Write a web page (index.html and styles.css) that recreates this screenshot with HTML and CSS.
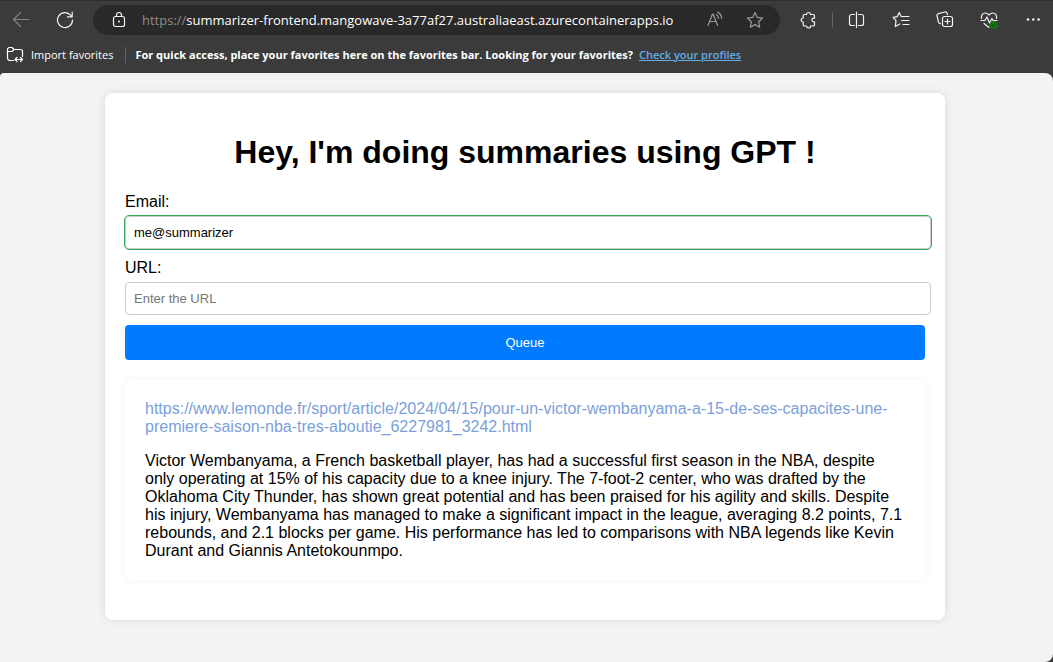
FILE: index.html
```html
<!DOCTYPE html>
<html lang="en">
<head>
<meta charset="utf-8">
<title>Summarizer</title>
<link rel="stylesheet" href="styles.css">
</head>
<body>
<header class="chrome">
  <div class="toolbar">
    <button class="tool tool-disabled" type="button" aria-label="Back"><svg width="18" height="18" viewBox="0 0 18 18"><path d="M17 8.500H1.500M8.500 1.500 1.500 8.500l7 7"/></svg></button>
    <button class="tool" type="button" aria-label="Refresh"><svg width="18" height="18" viewBox="0 0 18 18"><path d="M16.500 9A7.500 7.500 0 1 1 14.800 4.300L16 5.500M16.200 1v4.800h-4.800"/></svg></button>
    <div class="address">
      <button class="address-icon" type="button" aria-label="View site information"><svg width="18" height="18" viewBox="0 0 18 18"><rect x="3.500" y="5.500" width="11" height="10" rx="2"/><path d="M6.500 5.500V4a2.500 2.500 0 0 1 5 0v1.500"/><circle class="solid" cx="9" cy="10.500" r="1"/></svg></button>
      <label class="scheme" for="address-text">https://</label>
      <input class="address-text" id="address-text" type="text" spellcheck="false" value="summarizer-frontend.mangowave-3a77af27.australiaeast.azurecontainerapps.io">
      <button class="address-icon address-dim" type="button" aria-label="Read aloud"><svg width="18" height="18" viewBox="0 0 18 18"><path d="M2 14.500 6.500 3h.6L11.600 14.500M3.700 10.500h6.200M10.500 3.700c1.200.8 1.900 2 2 3.600M11.600 1.100c2.600 1.400 4 3.500 4.100 6.200"/></svg></button>
      <button class="address-icon address-dim" type="button" aria-label="Add to favorites"><svg width="18" height="18" viewBox="0 0 18 18"><path d="m9 1.500 2.300 4.900 5.300.7-3.900 3.700 1 5.400L9 13.600l-4.700 2.600 1-5.400L1.400 7.100l5.300-.7z"/></svg></button>
    </div>
    <button class="tool" type="button" aria-label="Extensions"><svg width="18" height="18" viewBox="0 0 18 18"><path d="M5.500 3.500h2a2 2 0 0 1 4 0h2.700a1.300 1.300 0 0 1 1.300 1.300V7.200h-.8a1.600 1.600 0 0 0 0 3.600h.8v2.900a1.300 1.300 0 0 1-1.300 1.300h-2.700a2 2 0 0 1-4 0h-2a1.300 1.300 0 0 1-1.300-1.300V11a2 2 0 0 1 0-4V4.800a1.300 1.300 0 0 1 1.300-1.300z"/></svg></button>
    <span class="tool-divider"></span>
    <button class="tool" type="button" aria-label="Split screen"><svg width="18" height="18" viewBox="0 0 18 18"><path d="M6.500 3.500h-3a2 2 0 0 0-2 2v7a2 2 0 0 0 2 2h3M10.500 3.500h3a2 2 0 0 1 2 2v7a2 2 0 0 1-2 2h-3M8.500 1v15.500"/></svg></button>
    <button class="tool" type="button" aria-label="Favorites"><svg width="18" height="18" viewBox="0 0 18 18"><path d="m11 5.700-1.800-.2L7.200 1.500 5.200 5.700l-4 .7L4 9.700l-.7 5.900 4.500-2.600M11 5.500h6M9.500 9.500H17M11 13.500h6"/></svg></button>
    <button class="tool" type="button" aria-label="Collections"><svg width="18" height="18" viewBox="0 0 18 18"><path d="M4.500 12.700c-1 0-1.700-.5-2-1.500L1 4.800C.8 3.700 1.300 3 2.300 2.700L8.800 1c1.200-.3 2 .2 2.300 1.300l.4 1.400"/><rect x="6.500" y="5.500" width="10" height="10" rx="2"/><path d="M11.500 8v5M9 10.500h5"/></svg></button>
    <button class="tool" type="button" aria-label="Browser essentials"><svg width="18" height="18" viewBox="0 0 18 18"><path d="M1.500 7.500C.8 4 3 2 5.200 2 7 2 8.200 3 9 4c.8-1 2-2 3.800-2 2.300 0 4.400 2 3.700 5.500M1 9.500h4L7 6l2.500 6L12 7.500l1 2h4M4 12.500l5 4"/><circle class="status" cx="13.500" cy="14" r="3.700"/><path class="status-tick" d="m12 14 1 1 2-2"/></svg></button>
    <button class="tool" type="button" aria-label="Settings and more"><svg width="18" height="18" viewBox="0 0 18 18"><g class="solid"><circle cx="4" cy="8.500" r="1.300"/><circle cx="9.300" cy="8.500" r="1.300"/><circle cx="14.600" cy="8.500" r="1.300"/></g></svg></button>
  </div>
  <div class="favorites">
    <button class="import" type="button"><svg width="18" height="18" viewBox="0 0 18 18"><path d="M7.500 14.500H4a2.500 2.500 0 0 1-2.500-2.500V3.500A2 2 0 0 1 3.500 1.500H6l2 2h6.500a2 2 0 0 1 2 2v5M1.500 5.500H6l2-2M9 13.500h7.500M11 11.500l-2 2 2 2M14.500 11.500l2 2-2 2"/></svg>Import favorites</button>
    <span class="favorites-divider"></span>
    <span class="favorites-note">For quick access, place your favorites here on the favorites bar. Looking for your favorites?</span>
    <a class="favorites-link" href="#profiles">Check your profiles</a>
  </div>
</header>
<main class="page">
  <div class="container">
    <h1 class="title">Hey, I'm doing summaries using GPT !</h1>
    <form class="form">
      <label class="label" for="email">Email:</label>
      <input class="field field-active" id="email" type="text" value="me@summarizer">
      <label class="label" for="url">URL:</label>
      <input class="field" id="url" type="text" placeholder="Enter the URL">
      <button class="queue" type="button">Queue</button>
    </form>
    <article class="summary">
      <a class="summary-link" href="https://www.lemonde.fr/sport/article/2024/04/15/pour-un-victor-wembanyama-a-15-de-ses-capacites-une-premiere-saison-nba-tres-aboutie_6227981_3242.html">https://www.lemonde.fr/sport/article/2024/04/15/pour-un-victor-wembanyama-a-15-de-ses-capacites-une-premiere-saison-nba-tres-aboutie_6227981_3242.html</a>
      <p class="summary-text">Victor Wembanyama, a French basketball player, has had a successful first season in the NBA, despite only operating at 15% of his capacity due to a knee injury. The 7-foot-2 center, who was drafted by the Oklahoma City Thunder, has shown great potential and has been praised for his agility and skills. Despite his injury, Wembanyama has managed to make a significant impact in the league, averaging 8.2 points, 7.1 rebounds, and 2.1 blocks per game. His performance has led to comparisons with NBA legends like Kevin Durant and Giannis Antetokounmpo.</p>
    </article>
  </div>
</main>
</body>
</html>
```
FILE: styles.css
```css
* {
  box-sizing: border-box;
}

body {
  margin: 0;
  min-height: 100vh;
  display: flex;
  flex-direction: column;
  background: #3b3b3b;
  font: 16px/18px "Liberation Sans", Arial, sans-serif;
  color: #000;
}

button,
input {
  font-family: inherit;
}

svg {
  flex: none;
  fill: none;
  stroke: currentColor;
  stroke-width: 1.2;
  stroke-linecap: round;
  stroke-linejoin: round;
}

.solid {
  fill: currentColor;
  stroke: none;
}

.status {
  fill: #107c10;
  stroke: none;
}

.status-tick {
  stroke: #0a4f0a;
}

.chrome {
  padding-bottom: 3px;
  border-top: 1px solid #2d2d2d;
  font-family: "Open Sans", "Noto Sans", sans-serif;
  font-size: 11px;
  color: #fff;
}

.toolbar {
  display: flex;
  align-items: center;
  gap: 4px;
  height: 38px;
  padding-left: 1px;
}

.tool,
.address-icon {
  display: flex;
  align-items: center;
  justify-content: center;
  flex: none;
  width: 40px;
  height: 30px;
  padding: 0;
  border: 0;
  background: none;
  color: #f2f2f2;
}

.tool-disabled {
  color: #858585;
}

.tool-divider {
  flex: none;
  width: 1px;
  height: 16px;
  background: #626262;
}

.address {
  display: flex;
  align-items: center;
  flex: 1;
  min-width: 0;
  height: 30px;
  margin: 0 4px;
  padding: 0 5px 0 6px;
  border-radius: 15px;
  background: #292929;
  font-size: 13px;
}

.scheme {
  padding-left: 3px;
  color: #8c8c8c;
}

.address-text {
  flex: 1;
  min-width: 0;
  padding: 0;
  border: 0;
  outline: 0;
  background: none;
  font-size: 13px;
  color: #fff;
}

.address-dim {
  color: #9a9a9a;
}

.favorites {
  display: flex;
  align-items: center;
  height: 31px;
  padding-left: 6px;
  white-space: nowrap;
}

.import {
  display: flex;
  align-items: center;
  gap: 7px;
  padding: 0;
  border: 0;
  background: none;
  font-size: 11px;
  line-height: 18px;
  color: #fff;
}

.favorites-divider {
  width: 1px;
  height: 16px;
  margin: 0 9px 0 12px;
  background: #626262;
}

.favorites-note {
  font-weight: 700;
}

.favorites-link {
  margin-left: 6px;
  font-weight: 600;
  color: #63ade5;
}

.page {
  flex: 1;
  padding: 20px 3px 20px 0;
  border-radius: 4px 8px 8px 0;
  background: #f3f3f3;
}

.container {
  max-width: 840px;
  margin: 0 auto;
  padding: 20px;
  border-radius: 8px;
  background: #fff;
  box-shadow: 0 0 10px rgba(0, 0, 0, 0.1);
}

.title {
  margin: 21px 0 22px;
  font-size: 32px;
  line-height: 37px;
  text-align: center;
}

.label {
  display: block;
  margin-bottom: 5px;
}

.field {
  display: block;
  width: calc(100% + 6px);
  height: 33px;
  margin-bottom: 10px;
  padding: 8px;
  border: 1px solid #ccc;
  border-radius: 4px;
  background: #fff;
  font-size: 13px;
  color: #000;
}

.field::placeholder {
  color: #757575;
}

.field-active {
  outline: 1px solid #2fa84f;
}

.queue {
  display: block;
  width: 100%;
  height: 35px;
  border: 0;
  border-radius: 4px;
  background: #007bff;
  font-size: 13px;
  color: #fff;
}

.summary {
  margin: 20px 0;
  padding: 20px;
  border-radius: 8px;
  background: #fff;
  box-shadow: 0 0 10px rgba(0, 0, 0, 0.06);
}

.summary-link {
  display: block;
  color: #7b9fdb;
  text-decoration: none;
}

.summary-text {
  margin: 16px 0 0;
}
```
